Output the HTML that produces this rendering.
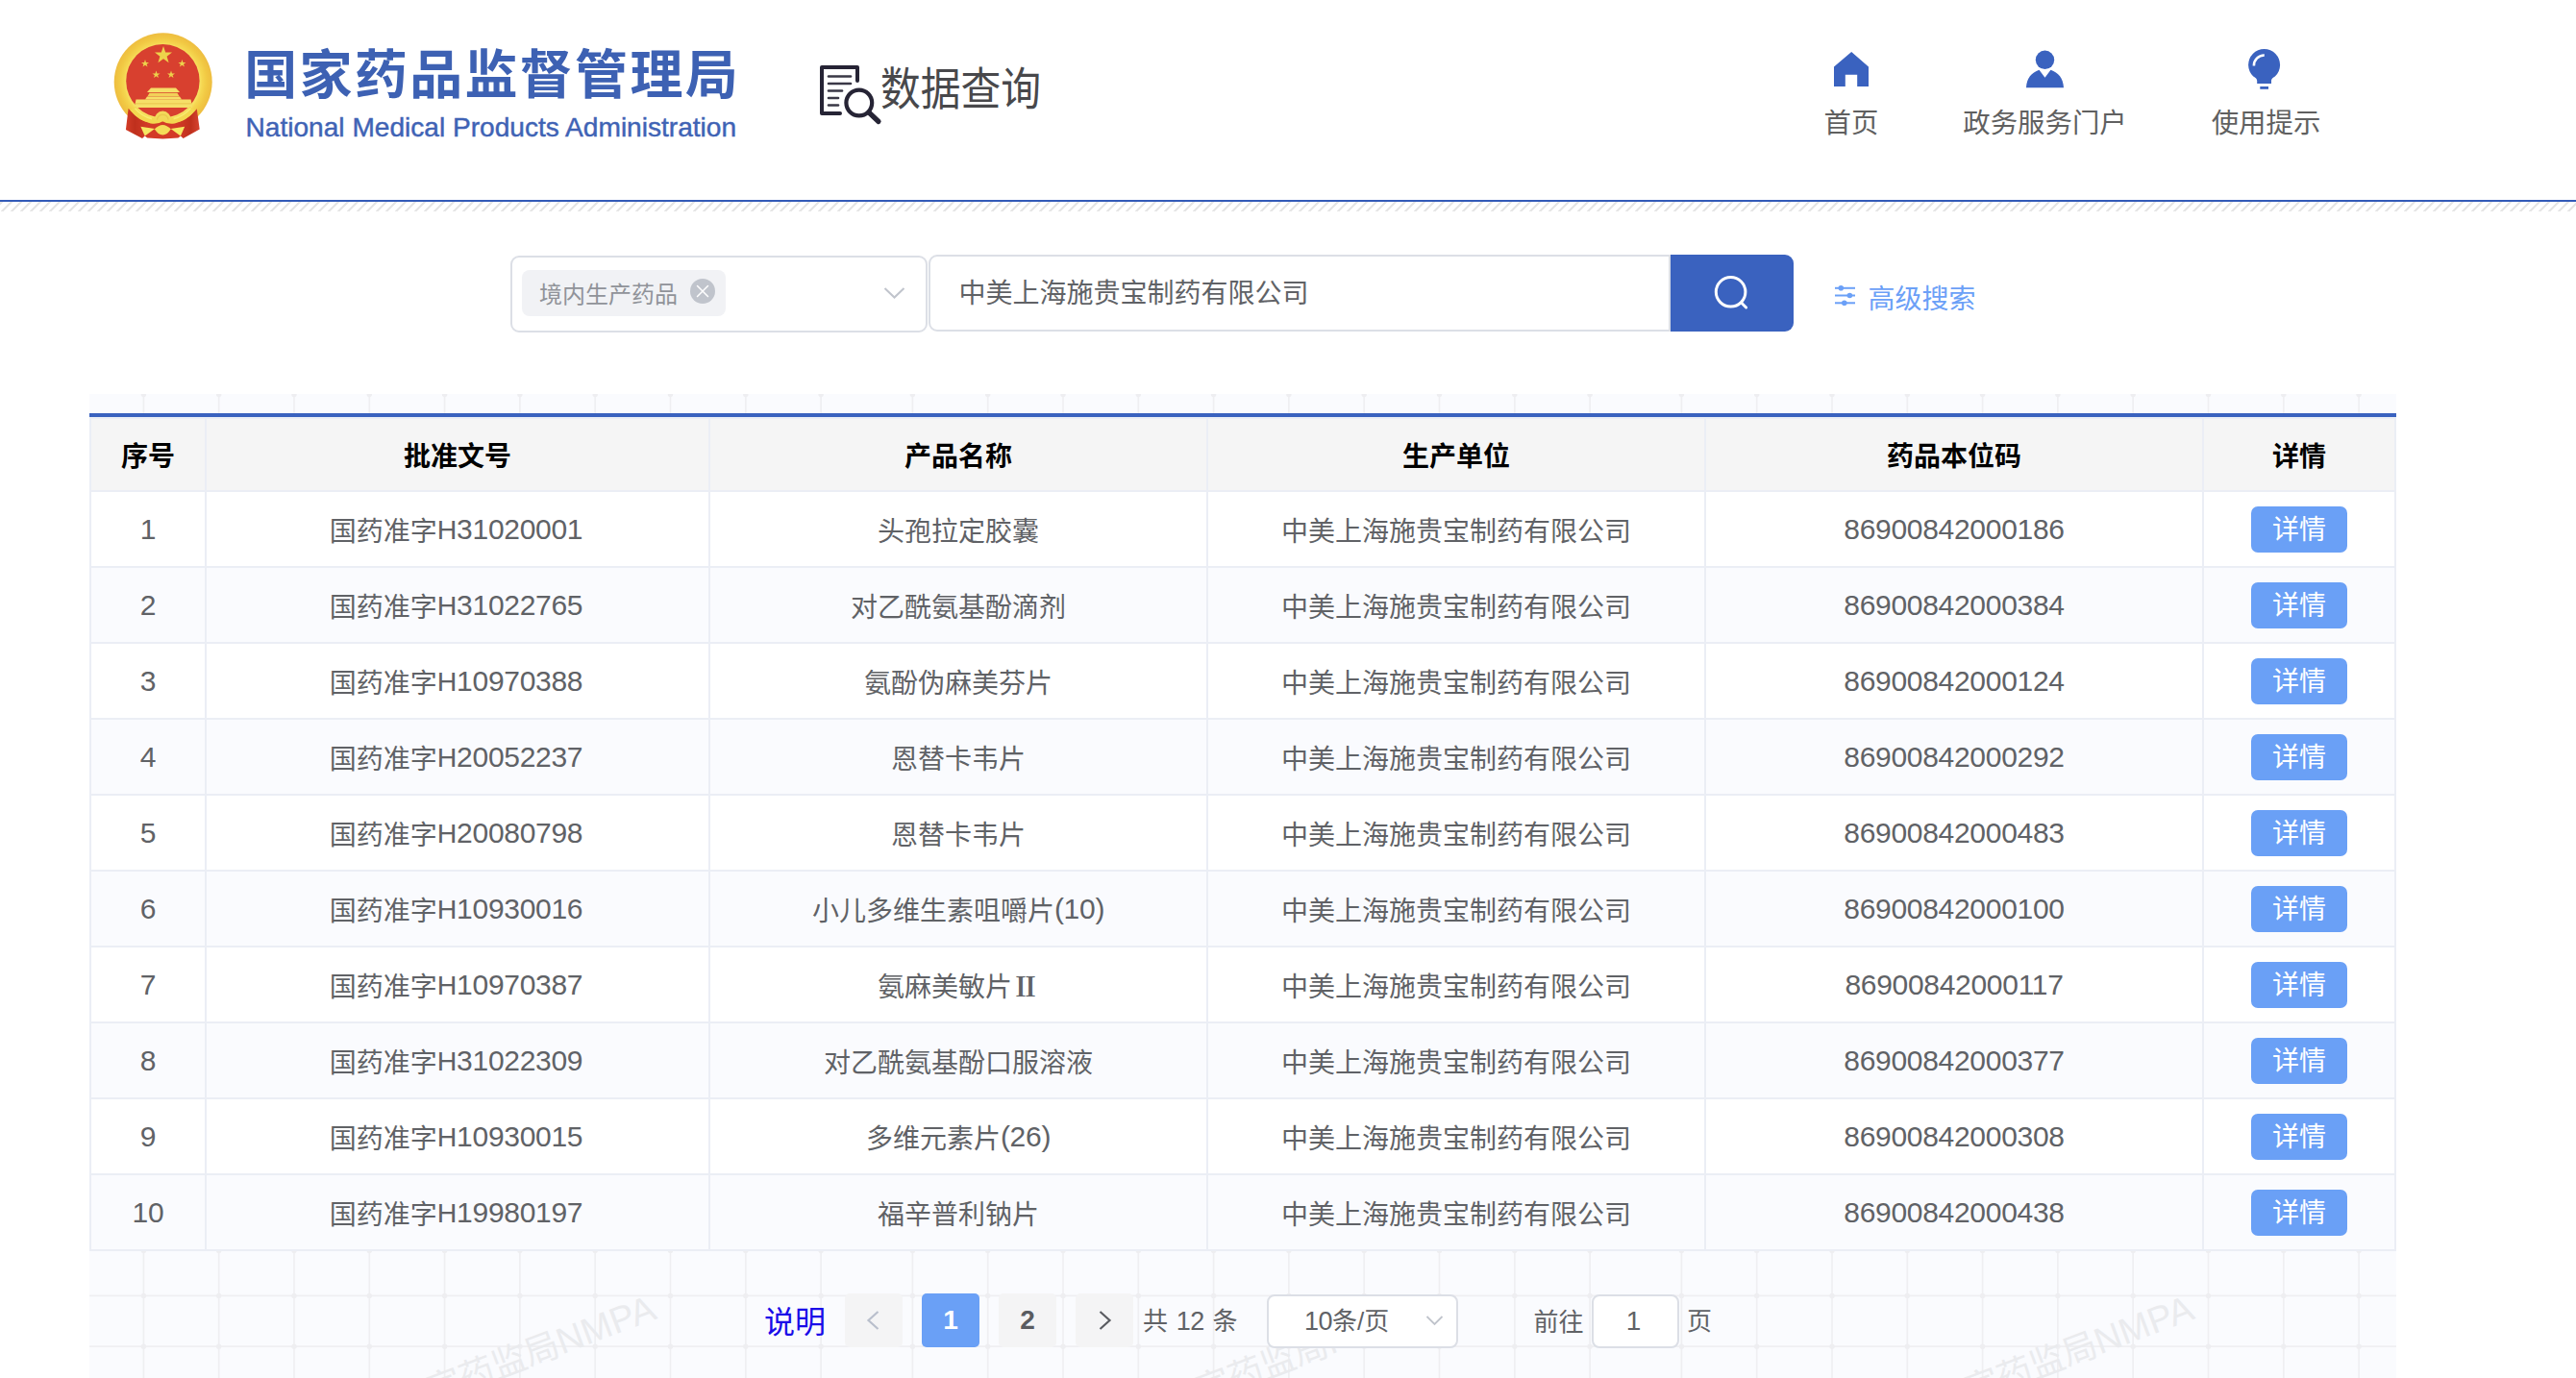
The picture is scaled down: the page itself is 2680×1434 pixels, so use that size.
<!DOCTYPE html>
<html lang="zh-CN">
<head>
<meta charset="utf-8">
<title>国家药品监督管理局 数据查询</title>
<style>
html,body{margin:0;padding:0;background:#fff;}
body{width:2680px;height:1434px;overflow:hidden;font-family:"Liberation Sans","Noto Sans CJK SC",sans-serif;color:#606266;}
#page{position:relative;width:2680px;height:1434px;overflow:hidden;background:#fff;}
#page div,#page span,#page svg{box-sizing:border-box;}
.abs{position:absolute;}
/* header */
#emblem{position:absolute;left:116px;top:32px;width:108px;height:114px;}
#title{position:absolute;left:254.3px;top:38.3px;font-size:55px;line-height:80px;font-weight:700;color:#3d61b3;white-space:nowrap;letter-spacing:2.3px;}
#subtitle{position:absolute;left:255.5px;top:116.5px;font-size:28.1px;line-height:32px;color:#3f63b5;white-space:nowrap;-webkit-text-stroke:0.45px #3f63b5;}
#dqicon{position:absolute;left:850px;top:64px;width:72px;height:70px;}
#dqtext{position:absolute;left:915.5px;top:63px;font-size:47px;line-height:60px;color:#48484b;white-space:nowrap;transform-origin:0 0;transform:scaleX(0.889);font-weight:400;}
.nav{position:absolute;top:110px;font-size:28.4px;line-height:36px;color:#606060;white-space:nowrap;text-align:center;}
.navi{position:absolute;}
#hline{position:absolute;left:0;top:208px;width:2680px;height:2px;background:#335bb8;}
#hatch{position:absolute;left:-6px;top:210px;width:2700px;height:10px;
 background:repeating-linear-gradient(135deg,#fff 0,#fff 4.7px,#e6e6e6 4.8px,#e6e6e6 7.0711px);}
/* search */
#sel{position:absolute;left:531px;top:266px;width:434px;height:80px;border:2px solid #dcdfe6;border-radius:9px;background:#fff;}
#tag{position:absolute;left:543px;top:281px;width:212px;height:48px;border-radius:8px;background:#f1f2f5;}
#tagtxt{position:absolute;left:561px;top:288.5px;font-size:24px;line-height:36px;color:#909399;white-space:nowrap;}
#tagx{position:absolute;left:718px;top:290px;width:26px;height:26px;}
#selarrow{position:absolute;left:916px;top:294px;width:30px;height:22px;}
#inp{position:absolute;left:966px;top:265px;width:772px;height:80px;border:2px solid #dcdfe6;border-radius:9px 0 0 9px;background:#fff;}
#inptxt{position:absolute;left:997.5px;top:286px;font-size:28px;line-height:40px;color:#606266;white-space:nowrap;}
#sbtn{position:absolute;left:1738px;top:265px;width:128px;height:80px;background:#3a62bf;border-radius:0 9px 9px 0;}
#sbtn svg{position:absolute;left:42px;top:18px;width:44px;height:44px;}
#advi{position:absolute;left:1906px;top:294px;width:28px;height:28px;}
#adv{position:absolute;left:1943.5px;top:291.5px;font-size:28px;line-height:40px;color:#6ba0f7;white-space:nowrap;}
/* panel */
#panel{position:absolute;left:93px;top:410px;width:2400px;height:1024px;background:#fafbfe;overflow:hidden;}
#grid{position:absolute;left:0;top:0;width:2400px;height:1024px;}
#blueline{position:absolute;left:0;top:20px;width:2400px;height:4px;background:#3a62bf;}
.tbl{position:absolute;left:0;top:24px;width:2400px;height:868px;border-left:2px solid #ebeef5;border-top:2px solid #ebeef5;background:#fff;}
.thead,.tr{position:absolute;left:0;width:2398px;display:flex;}
.thead{top:0;height:76px;background:#f5f5f5;font-weight:700;color:#000;}
.tr{height:79px;}
.c{height:100%;border-right:2px solid #ebeef5;border-bottom:2px solid #ebeef5;text-align:center;font-size:28px;white-space:nowrap;overflow:hidden;}
.thead .c{line-height:80px;}
.tr .c{line-height:84px;color:#606266;}
.c1{width:120px}.c2{width:524px}.c3{width:518px}.c4{width:518px}.c5{width:518px}.c6{width:200px}
.tr.odd{background:#fff}.tr.even{background:#fafbfe}
.l{font-size:30px;letter-spacing:-0.3px;position:relative;top:-2px;}
.btn{display:inline-block;width:100px;height:48px;line-height:50px;border-radius:7px;background:#6aa0f6;color:#fff;font-size:28px;vertical-align:top;margin-top:15px;}
/* pager */
.pg{position:absolute;font-size:26px;line-height:56px;color:#606266;white-space:nowrap;}
.pb{position:absolute;top:936px;width:60px;height:56px;border-radius:5px;background:#f4f4f5;text-align:center;font-weight:700;font-size:28px;line-height:56px;color:#5a5c61;}
.pbox{position:absolute;top:937px;height:56px;border:2px solid #dcdfe6;border-radius:8px;background:#fff;}
.wm{position:absolute;font-size:38px;line-height:48px;color:#eaebee;white-space:nowrap;transform-origin:100% 100%;transform:rotate(-20.6deg);}
.l2{font-size:27px;letter-spacing:-0.5px;}
.rn{font-family:"Noto Serif CJK SC","Liberation Serif",serif;font-weight:700;}
.h{font-size:28.5px;}
.tr .c2{padding-right:3px;}
.l,.l2,.h,.rn{line-height:0;}

</style>
</head>
<body>
<div id="page">
<svg id="emblem" viewBox="116 32 108 114">
  <defs>
    <radialGradient id="gring" cx="50%" cy="50%" r="50%">
      <stop offset="0.74" stop-color="#f8e465"/>
      <stop offset="0.80" stop-color="#f5d650"/>
      <stop offset="0.90" stop-color="#f1c843"/>
      <stop offset="1" stop-color="#eebd40"/>
    </radialGradient>
    <linearGradient id="grib" x1="0" y1="0" x2="1" y2="0">
      <stop offset="0" stop-color="#d43c27"/>
      <stop offset="0.12" stop-color="#bf301d"/>
      <stop offset="0.30" stop-color="#d33a27"/>
      <stop offset="0.70" stop-color="#d33a27"/>
      <stop offset="0.88" stop-color="#bf301d"/>
      <stop offset="1" stop-color="#d64330"/>
    </linearGradient>
  </defs>
  <!-- gold ring -->
  <circle cx="169.7" cy="85.3" r="51" fill="url(#gring)"/>
  <circle cx="169.4" cy="84.2" r="38.2" fill="#d8402f"/>
  <!-- stars -->
  <g fill="#edd24b">
    <polygon points="170,48 172.2,54.5 179,54.6 173.6,58.7 175.6,65.2 170,61.3 164.4,65.2 166.4,58.7 161,54.6 167.8,54.5"/>
    <polygon points="151,62 152,64.9 155,64.9 152.6,66.7 153.5,69.6 151,67.8 148.5,69.6 149.4,66.7 147,64.9 150,64.9"/>
    <polygon points="189.4,62 190.4,64.9 193.4,64.9 191,66.7 191.9,69.6 189.4,67.8 186.9,69.6 187.8,66.7 185.4,64.9 188.4,64.9"/>
    <polygon points="162.5,73.5 163.5,76.4 166.5,76.4 164.1,78.2 165,81.1 162.5,79.3 160,81.1 160.9,78.2 158.5,76.4 161.5,76.4"/>
    <polygon points="178,73.5 179,76.4 182,76.4 179.6,78.2 180.5,81.1 178,79.3 175.5,81.1 176.4,78.2 174,76.4 177,76.4"/>
  </g>
  <!-- Tiananmen -->
  <g fill="#f6df68">
    <path d="M157 91.4 L183 91.4 L187 96 L153 96 Z"/>
    <path d="M155.5 96.8 L184.5 96.8 L186.5 100.2 L153.5 100.2 Z" fill="#f2d158"/>
    <path d="M153 100.6 L187 100.6 L189 103.6 L151 103.6 Z"/>
    <path d="M141.5 103.4 L198.5 103.4 L200.2 112 L139.8 112 Z"/>
  </g>
  <rect x="140.5" y="107.3" width="59" height="1.1" fill="#ecc650"/>
  <!-- ribbon -->
  <path d="M133.6 112.8 C140 121 149 127.6 158 127.6 L169.3 124 L180.6 127.6 C189.6 127.6 198.6 121 204.8 113.2 L207.7 134.4 L190.6 143.9 L187.9 141.6 L185.4 143.6 Q169.3 145.2 153.2 143.6 L150.7 141.6 L148 143.9 L130.9 135 Z" fill="url(#grib)"/>
  <!-- gold band (inner part of wreath) -->
  <path d="M138.4 112.8 C143 119 150 123.5 157.5 125.2 C161 125.8 165 125.5 169.3 122.8 C173.6 125.5 177.6 125.8 181.1 125.2 C188.6 123.5 195.6 119 200.2 112.8" fill="none" stroke="#f3d850" stroke-width="6.6"/>
  <path d="M140.4 112.8 C145 118 151 122 158 123.6 M198.2 112.8 C193.6 118 187.6 122 180.6 123.6" fill="none" stroke="#f8ec70" stroke-width="1.6"/>
  <!-- gear -->
  <path d="M160.4 125.4 A8.9 9.8 0 0 1 178.2 125.4 L169.3 124.4 Z" fill="#f2d85a"/>
  <path d="M163.4 124.6 A6 6.4 0 0 1 175.2 124.6" fill="none" stroke="#e9c84c" stroke-width="1.2"/>
  <!-- lower ornament + tassels -->
  <path d="M160.8 134.2 Q165 130 169.3 129.9 Q173.6 130 177.8 134.2 Q174 140.4 169.3 140.4 Q164.6 140.4 160.8 134.2 Z" fill="#f4dc58"/>
  <path d="M146.4 131.8 L161 134 L150.7 141.6 Z" fill="#f6e862"/>
  <path d="M192.2 131.8 L177.6 134 L187.9 141.6 Z" fill="#f6e862"/>
</svg>
<div id="title">国家药品监督管理局</div>
<div id="subtitle">National Medical Products Administration</div>
<svg id="dqicon" viewBox="850 64 72 70">
  <path d="M892 84 L892 70 L855 70 L855 118 L874 118" fill="none" stroke="#262435" stroke-width="4" stroke-linejoin="round" stroke-linecap="round"/>
  <g stroke="#3a3846" stroke-width="2.6" stroke-linecap="round">
    <line x1="862" y1="79.5" x2="885" y2="79.5"/>
    <line x1="862" y1="87" x2="885" y2="87"/>
    <line x1="862" y1="94.5" x2="876" y2="94.5"/>
    <line x1="862" y1="102" x2="872" y2="102"/>
    <line x1="862" y1="109.5" x2="872" y2="109.5"/>
  </g>
  <circle cx="893.8" cy="107" r="13.4" fill="#fff" stroke="#262435" stroke-width="4.2"/>
  <line x1="904.5" y1="117.5" x2="914" y2="126.5" stroke="#262435" stroke-width="5.2" stroke-linecap="round"/>
</svg>
<div id="dqtext">数据查询</div>

<svg class="navi" style="left:1904px;top:50px;width:44px;height:44px" viewBox="1904 50 44 44">
  <path d="M1908 69.5 L1926.2 54 L1944 69.5 L1944 90 L1932.2 90 L1932.2 77.8 L1919.8 77.8 L1919.8 90 L1908 90 Z" fill="#3a62bf"/>
</svg>
<div class="nav" style="left:1876px;width:100px">首页</div>
<svg class="navi" style="left:2104px;top:48px;width:48px;height:48px" viewBox="2104 48 48 48">
  <circle cx="2127.5" cy="62.3" r="9.7" fill="#3a62bf"/>
  <path d="M2108 91.3 C2108.5 81.5 2113.5 75.5 2121.5 72.8 L2127.5 80.8 L2133.5 72.8 C2141.5 75.5 2146.5 81.5 2147 91.3 Z" fill="#3a62bf"/>
</svg>
<div class="nav" style="left:2027.5px;width:200px">政务服务门户</div>
<svg class="navi" style="left:2334px;top:48px;width:44px;height:48px" viewBox="2334 48 44 48">
  <path d="M2348.2 87 L2348.2 84 C2348.2 82 2346.6 81 2344.3 79.5 A16.5 16.5 0 1 1 2366.9 79.5 C2364.6 81 2363 82 2363 84 L2363 87 Z" fill="#3a62bf"/>
  <rect x="2351.3" y="90" width="8.7" height="2.8" fill="#3a62bf"/>
  <path d="M2344.9 68.4 A10.7 10.7 0 0 1 2355.8 57.5" fill="none" stroke="#fff" stroke-width="2.6"/>
</svg>
<div class="nav" style="left:2257.5px;width:200px">使用提示</div>
<div id="hline"></div>
<div id="hatch"></div>

<div id="sel"></div>
<div id="tag"></div>
<div id="tagtxt">境内生产药品</div>
<svg id="tagx" viewBox="0 0 26 26">
  <circle cx="13" cy="13" r="13" fill="#c0c4cc"/>
  <path d="M7.5 7.5 L18.5 18.5 M18.5 7.5 L7.5 18.5" stroke="#fff" stroke-width="1.5" stroke-linecap="round"/>
</svg>
<svg id="selarrow" viewBox="916 294 30 22">
  <path d="M920.5 300 L930.5 309.5 L940.5 300" fill="none" stroke="#c0c4cc" stroke-width="2"/>
</svg>
<div id="inp"></div>
<div id="inptxt">中美上海施贵宝制药有限公司</div>
<div id="sbtn"><svg viewBox="1780 283 44 44">
  <circle cx="1800.6" cy="303.8" r="15.3" fill="none" stroke="#fff" stroke-width="3"/>
  <line x1="1811.6" y1="315" x2="1816.6" y2="320" stroke="#fff" stroke-width="3" stroke-linecap="round"/>
</svg></div>
<svg id="advi" viewBox="1906 294 28 28">
  <g stroke="#6ba0f7" stroke-width="2">
    <line x1="1909" y1="299.8" x2="1930" y2="299.8"/>
    <line x1="1909" y1="307.5" x2="1930" y2="307.5"/>
    <line x1="1909" y1="315.3" x2="1930" y2="315.3"/>
  </g>
  <g fill="#6ba0f7">
    <circle cx="1915.3" cy="299.8" r="2.8"/>
    <circle cx="1924.4" cy="307.5" r="2.8"/>
    <circle cx="1918.8" cy="315.3" r="2.8"/>
  </g>
</svg>
<div id="adv">高级搜索</div>

<div id="panel">
<svg id="grid" viewBox="0 0 2400 1024">
<g stroke="#efeff2" stroke-width="1.7">
<line x1="56.4" y1="0" x2="56.4" y2="20"/><line x1="56.4" y1="892" x2="56.4" y2="1024"/>
<line x1="134.7" y1="0" x2="134.7" y2="20"/><line x1="134.7" y1="892" x2="134.7" y2="1024"/>
<line x1="213.0" y1="0" x2="213.0" y2="20"/><line x1="213.0" y1="892" x2="213.0" y2="1024"/>
<line x1="291.3" y1="0" x2="291.3" y2="20"/><line x1="291.3" y1="892" x2="291.3" y2="1024"/>
<line x1="369.6" y1="0" x2="369.6" y2="20"/><line x1="369.6" y1="892" x2="369.6" y2="1024"/>
<line x1="447.9" y1="0" x2="447.9" y2="20"/><line x1="447.9" y1="892" x2="447.9" y2="1024"/>
<line x1="526.2" y1="0" x2="526.2" y2="20"/><line x1="526.2" y1="892" x2="526.2" y2="1024"/>
<line x1="604.5" y1="0" x2="604.5" y2="20"/><line x1="604.5" y1="892" x2="604.5" y2="1024"/>
<line x1="682.8" y1="0" x2="682.8" y2="20"/><line x1="682.8" y1="892" x2="682.8" y2="1024"/>
<line x1="761.1" y1="0" x2="761.1" y2="20"/><line x1="761.1" y1="892" x2="761.1" y2="1024"/>
<line x1="856.4" y1="0" x2="856.4" y2="20"/><line x1="856.4" y1="892" x2="856.4" y2="1024"/>
<line x1="934.7" y1="0" x2="934.7" y2="20"/><line x1="934.7" y1="892" x2="934.7" y2="1024"/>
<line x1="1013.0" y1="0" x2="1013.0" y2="20"/><line x1="1013.0" y1="892" x2="1013.0" y2="1024"/>
<line x1="1091.3" y1="0" x2="1091.3" y2="20"/><line x1="1091.3" y1="892" x2="1091.3" y2="1024"/>
<line x1="1169.6" y1="0" x2="1169.6" y2="20"/><line x1="1169.6" y1="892" x2="1169.6" y2="1024"/>
<line x1="1247.9" y1="0" x2="1247.9" y2="20"/><line x1="1247.9" y1="892" x2="1247.9" y2="1024"/>
<line x1="1326.2" y1="0" x2="1326.2" y2="20"/><line x1="1326.2" y1="892" x2="1326.2" y2="1024"/>
<line x1="1404.5" y1="0" x2="1404.5" y2="20"/><line x1="1404.5" y1="892" x2="1404.5" y2="1024"/>
<line x1="1482.8" y1="0" x2="1482.8" y2="20"/><line x1="1482.8" y1="892" x2="1482.8" y2="1024"/>
<line x1="1561.1" y1="0" x2="1561.1" y2="20"/><line x1="1561.1" y1="892" x2="1561.1" y2="1024"/>
<line x1="1656.4" y1="0" x2="1656.4" y2="20"/><line x1="1656.4" y1="892" x2="1656.4" y2="1024"/>
<line x1="1734.7" y1="0" x2="1734.7" y2="20"/><line x1="1734.7" y1="892" x2="1734.7" y2="1024"/>
<line x1="1813.0" y1="0" x2="1813.0" y2="20"/><line x1="1813.0" y1="892" x2="1813.0" y2="1024"/>
<line x1="1891.3" y1="0" x2="1891.3" y2="20"/><line x1="1891.3" y1="892" x2="1891.3" y2="1024"/>
<line x1="1969.6" y1="0" x2="1969.6" y2="20"/><line x1="1969.6" y1="892" x2="1969.6" y2="1024"/>
<line x1="2047.9" y1="0" x2="2047.9" y2="20"/><line x1="2047.9" y1="892" x2="2047.9" y2="1024"/>
<line x1="2126.2" y1="0" x2="2126.2" y2="20"/><line x1="2126.2" y1="892" x2="2126.2" y2="1024"/>
<line x1="2204.5" y1="0" x2="2204.5" y2="20"/><line x1="2204.5" y1="892" x2="2204.5" y2="1024"/>
<line x1="2282.8" y1="0" x2="2282.8" y2="20"/><line x1="2282.8" y1="892" x2="2282.8" y2="1024"/>
<line x1="2361.1" y1="0" x2="2361.1" y2="20"/><line x1="2361.1" y1="892" x2="2361.1" y2="1024"/>
<line x1="0" y1="938.4" x2="2400" y2="938.4"/>
<line x1="0" y1="991.2" x2="2400" y2="991.2"/>
</g>
<g fill="#eeeef1">
<circle cx="56.4" cy="0.5" r="2.7"/>
<circle cx="56.4" cy="891.5" r="2.7"/>
<circle cx="56.4" cy="938.4" r="2.7"/>
<circle cx="56.4" cy="991.2" r="2.7"/>
<circle cx="134.7" cy="0.5" r="2.7"/>
<circle cx="134.7" cy="891.5" r="2.7"/>
<circle cx="134.7" cy="938.4" r="2.7"/>
<circle cx="134.7" cy="991.2" r="2.7"/>
<circle cx="213.0" cy="0.5" r="2.7"/>
<circle cx="213.0" cy="891.5" r="2.7"/>
<circle cx="213.0" cy="938.4" r="2.7"/>
<circle cx="213.0" cy="991.2" r="2.7"/>
<circle cx="291.3" cy="0.5" r="2.7"/>
<circle cx="291.3" cy="891.5" r="2.7"/>
<circle cx="291.3" cy="938.4" r="2.7"/>
<circle cx="291.3" cy="991.2" r="2.7"/>
<circle cx="369.6" cy="0.5" r="2.7"/>
<circle cx="369.6" cy="891.5" r="2.7"/>
<circle cx="369.6" cy="938.4" r="2.7"/>
<circle cx="369.6" cy="991.2" r="2.7"/>
<circle cx="447.9" cy="0.5" r="2.7"/>
<circle cx="447.9" cy="891.5" r="2.7"/>
<circle cx="447.9" cy="938.4" r="2.7"/>
<circle cx="447.9" cy="991.2" r="2.7"/>
<circle cx="526.2" cy="0.5" r="2.7"/>
<circle cx="526.2" cy="891.5" r="2.7"/>
<circle cx="526.2" cy="938.4" r="2.7"/>
<circle cx="526.2" cy="991.2" r="2.7"/>
<circle cx="604.5" cy="0.5" r="2.7"/>
<circle cx="604.5" cy="891.5" r="2.7"/>
<circle cx="604.5" cy="938.4" r="2.7"/>
<circle cx="604.5" cy="991.2" r="2.7"/>
<circle cx="682.8" cy="0.5" r="2.7"/>
<circle cx="682.8" cy="891.5" r="2.7"/>
<circle cx="682.8" cy="938.4" r="2.7"/>
<circle cx="682.8" cy="991.2" r="2.7"/>
<circle cx="761.1" cy="0.5" r="2.7"/>
<circle cx="761.1" cy="891.5" r="2.7"/>
<circle cx="761.1" cy="938.4" r="2.7"/>
<circle cx="761.1" cy="991.2" r="2.7"/>
<circle cx="856.4" cy="0.5" r="2.7"/>
<circle cx="856.4" cy="891.5" r="2.7"/>
<circle cx="856.4" cy="938.4" r="2.7"/>
<circle cx="856.4" cy="991.2" r="2.7"/>
<circle cx="934.7" cy="0.5" r="2.7"/>
<circle cx="934.7" cy="891.5" r="2.7"/>
<circle cx="934.7" cy="938.4" r="2.7"/>
<circle cx="934.7" cy="991.2" r="2.7"/>
<circle cx="1013.0" cy="0.5" r="2.7"/>
<circle cx="1013.0" cy="891.5" r="2.7"/>
<circle cx="1013.0" cy="938.4" r="2.7"/>
<circle cx="1013.0" cy="991.2" r="2.7"/>
<circle cx="1091.3" cy="0.5" r="2.7"/>
<circle cx="1091.3" cy="891.5" r="2.7"/>
<circle cx="1091.3" cy="938.4" r="2.7"/>
<circle cx="1091.3" cy="991.2" r="2.7"/>
<circle cx="1169.6" cy="0.5" r="2.7"/>
<circle cx="1169.6" cy="891.5" r="2.7"/>
<circle cx="1169.6" cy="938.4" r="2.7"/>
<circle cx="1169.6" cy="991.2" r="2.7"/>
<circle cx="1247.9" cy="0.5" r="2.7"/>
<circle cx="1247.9" cy="891.5" r="2.7"/>
<circle cx="1247.9" cy="938.4" r="2.7"/>
<circle cx="1247.9" cy="991.2" r="2.7"/>
<circle cx="1326.2" cy="0.5" r="2.7"/>
<circle cx="1326.2" cy="891.5" r="2.7"/>
<circle cx="1326.2" cy="938.4" r="2.7"/>
<circle cx="1326.2" cy="991.2" r="2.7"/>
<circle cx="1404.5" cy="0.5" r="2.7"/>
<circle cx="1404.5" cy="891.5" r="2.7"/>
<circle cx="1404.5" cy="938.4" r="2.7"/>
<circle cx="1404.5" cy="991.2" r="2.7"/>
<circle cx="1482.8" cy="0.5" r="2.7"/>
<circle cx="1482.8" cy="891.5" r="2.7"/>
<circle cx="1482.8" cy="938.4" r="2.7"/>
<circle cx="1482.8" cy="991.2" r="2.7"/>
<circle cx="1561.1" cy="0.5" r="2.7"/>
<circle cx="1561.1" cy="891.5" r="2.7"/>
<circle cx="1561.1" cy="938.4" r="2.7"/>
<circle cx="1561.1" cy="991.2" r="2.7"/>
<circle cx="1656.4" cy="0.5" r="2.7"/>
<circle cx="1656.4" cy="891.5" r="2.7"/>
<circle cx="1656.4" cy="938.4" r="2.7"/>
<circle cx="1656.4" cy="991.2" r="2.7"/>
<circle cx="1734.7" cy="0.5" r="2.7"/>
<circle cx="1734.7" cy="891.5" r="2.7"/>
<circle cx="1734.7" cy="938.4" r="2.7"/>
<circle cx="1734.7" cy="991.2" r="2.7"/>
<circle cx="1813.0" cy="0.5" r="2.7"/>
<circle cx="1813.0" cy="891.5" r="2.7"/>
<circle cx="1813.0" cy="938.4" r="2.7"/>
<circle cx="1813.0" cy="991.2" r="2.7"/>
<circle cx="1891.3" cy="0.5" r="2.7"/>
<circle cx="1891.3" cy="891.5" r="2.7"/>
<circle cx="1891.3" cy="938.4" r="2.7"/>
<circle cx="1891.3" cy="991.2" r="2.7"/>
<circle cx="1969.6" cy="0.5" r="2.7"/>
<circle cx="1969.6" cy="891.5" r="2.7"/>
<circle cx="1969.6" cy="938.4" r="2.7"/>
<circle cx="1969.6" cy="991.2" r="2.7"/>
<circle cx="2047.9" cy="0.5" r="2.7"/>
<circle cx="2047.9" cy="891.5" r="2.7"/>
<circle cx="2047.9" cy="938.4" r="2.7"/>
<circle cx="2047.9" cy="991.2" r="2.7"/>
<circle cx="2126.2" cy="0.5" r="2.7"/>
<circle cx="2126.2" cy="891.5" r="2.7"/>
<circle cx="2126.2" cy="938.4" r="2.7"/>
<circle cx="2126.2" cy="991.2" r="2.7"/>
<circle cx="2204.5" cy="0.5" r="2.7"/>
<circle cx="2204.5" cy="891.5" r="2.7"/>
<circle cx="2204.5" cy="938.4" r="2.7"/>
<circle cx="2204.5" cy="991.2" r="2.7"/>
<circle cx="2282.8" cy="0.5" r="2.7"/>
<circle cx="2282.8" cy="891.5" r="2.7"/>
<circle cx="2282.8" cy="938.4" r="2.7"/>
<circle cx="2282.8" cy="991.2" r="2.7"/>
<circle cx="2361.1" cy="0.5" r="2.7"/>
<circle cx="2361.1" cy="891.5" r="2.7"/>
<circle cx="2361.1" cy="938.4" r="2.7"/>
<circle cx="2361.1" cy="991.2" r="2.7"/>
</g></svg>
<div id="blueline"></div>
<div class="tbl">
<div class="thead"><div class="c c1">序号</div><div class="c c2">批准文号</div><div class="c c3">产品名称</div><div class="c c4">生产单位</div><div class="c c5">药品本位码</div><div class="c c6">详情</div></div>
<div class="tr odd" style="top:76px"><div class="c c1"><span class="l">1</span></div><div class="c c2">国药准字<span class="l"><span class="h">H</span>31020001</span></div><div class="c c3">头孢拉定胶囊</div><div class="c c4">中美上海施贵宝制药有限公司</div><div class="c c5"><span class="l">86900842000186</span></div><div class="c c6"><span class="btn">详情</span></div></div>
<div class="tr even" style="top:155px"><div class="c c1"><span class="l">2</span></div><div class="c c2">国药准字<span class="l"><span class="h">H</span>31022765</span></div><div class="c c3">对乙酰氨基酚滴剂</div><div class="c c4">中美上海施贵宝制药有限公司</div><div class="c c5"><span class="l">86900842000384</span></div><div class="c c6"><span class="btn">详情</span></div></div>
<div class="tr odd" style="top:234px"><div class="c c1"><span class="l">3</span></div><div class="c c2">国药准字<span class="l"><span class="h">H</span>10970388</span></div><div class="c c3">氨酚伪麻美芬片</div><div class="c c4">中美上海施贵宝制药有限公司</div><div class="c c5"><span class="l">86900842000124</span></div><div class="c c6"><span class="btn">详情</span></div></div>
<div class="tr even" style="top:313px"><div class="c c1"><span class="l">4</span></div><div class="c c2">国药准字<span class="l"><span class="h">H</span>20052237</span></div><div class="c c3">恩替卡韦片</div><div class="c c4">中美上海施贵宝制药有限公司</div><div class="c c5"><span class="l">86900842000292</span></div><div class="c c6"><span class="btn">详情</span></div></div>
<div class="tr odd" style="top:392px"><div class="c c1"><span class="l">5</span></div><div class="c c2">国药准字<span class="l"><span class="h">H</span>20080798</span></div><div class="c c3">恩替卡韦片</div><div class="c c4">中美上海施贵宝制药有限公司</div><div class="c c5"><span class="l">86900842000483</span></div><div class="c c6"><span class="btn">详情</span></div></div>
<div class="tr even" style="top:471px"><div class="c c1"><span class="l">6</span></div><div class="c c2">国药准字<span class="l"><span class="h">H</span>10930016</span></div><div class="c c3">小儿多维生素咀嚼片<span class="l">(10)</span></div><div class="c c4">中美上海施贵宝制药有限公司</div><div class="c c5"><span class="l">86900842000100</span></div><div class="c c6"><span class="btn">详情</span></div></div>
<div class="tr odd" style="top:550px"><div class="c c1"><span class="l">7</span></div><div class="c c2">国药准字<span class="l"><span class="h">H</span>10970387</span></div><div class="c c3">氨麻美敏片<span class="rn">Ⅱ</span></div><div class="c c4">中美上海施贵宝制药有限公司</div><div class="c c5"><span class="l">86900842000117</span></div><div class="c c6"><span class="btn">详情</span></div></div>
<div class="tr even" style="top:629px"><div class="c c1"><span class="l">8</span></div><div class="c c2">国药准字<span class="l"><span class="h">H</span>31022309</span></div><div class="c c3">对乙酰氨基酚口服溶液</div><div class="c c4">中美上海施贵宝制药有限公司</div><div class="c c5"><span class="l">86900842000377</span></div><div class="c c6"><span class="btn">详情</span></div></div>
<div class="tr odd" style="top:708px"><div class="c c1"><span class="l">9</span></div><div class="c c2">国药准字<span class="l"><span class="h">H</span>10930015</span></div><div class="c c3">多维元素片<span class="l">(26)</span></div><div class="c c4">中美上海施贵宝制药有限公司</div><div class="c c5"><span class="l">86900842000308</span></div><div class="c c6"><span class="btn">详情</span></div></div>
<div class="tr even" style="top:787px"><div class="c c1"><span class="l">10</span></div><div class="c c2">国药准字<span class="l"><span class="h">H</span>19980197</span></div><div class="c c3">福辛普利钠片</div><div class="c c4">中美上海施贵宝制药有限公司</div><div class="c c5"><span class="l">86900842000438</span></div><div class="c c6"><span class="btn">详情</span></div></div>
</div>
<div class="wm" style="right:1804.2px;bottom:51.3px"><span style="font-size:36px">国家药监局</span>NMPA</div>
<div class="wm" style="right:1004.2px;bottom:51.3px"><span style="font-size:36px">国家药监局</span>NMPA</div>
<div class="wm" style="right:204.2px;bottom:51.3px"><span style="font-size:36px">国家药监局</span>NMPA</div>
<div class="pg" style="left:702px;top:938px;font-size:32px;color:#1a0ce8">说明</div>
<div class="pb" style="left:786px"><svg style="position:absolute;left:20px;top:16px;width:20px;height:24px" viewBox="0 0 20 24"><path d="M14.5 3 L4.5 12 L14.5 21" fill="none" stroke="#b9bfcc" stroke-width="2.2"/></svg></div>
<div class="pb" style="left:866px;background:#6aa0f6;color:#fff">1</div>
<div class="pb" style="left:946px">2</div>
<div class="pb" style="left:1026px"><svg style="position:absolute;left:20px;top:16px;width:20px;height:24px" viewBox="0 0 20 24"><path d="M5.5 3 L15.5 12 L5.5 21" fill="none" stroke="#5a5c61" stroke-width="2.2"/></svg></div>
<div class="pg" style="left:1096px;top:937px;word-spacing:1.5px">共 <span class="l2">12</span> 条</div>
<div class="pbox" style="left:1224.5px;width:199px"></div>
<div class="pg" style="left:1264px;top:937px"><span class="l2">10</span>条/页</div>
<svg class="abs" style="left:1388px;top:955px;width:24px;height:20px" viewBox="0 0 24 20"><path d="M3.5 5 L11.5 13 L19.5 5" fill="none" stroke="#c0c4cc" stroke-width="1.8"/></svg>
<div class="pg" style="left:1502.5px;top:938px">前往</div>
<div class="pbox" style="left:1563px;width:91px"></div>
<div class="pg" style="left:1561px;top:936.5px;width:91px;text-align:center;font-size:28px">1</div>
<div class="pg" style="left:1662px;top:937px">页</div>

</div>
</div>
</body>
</html>
